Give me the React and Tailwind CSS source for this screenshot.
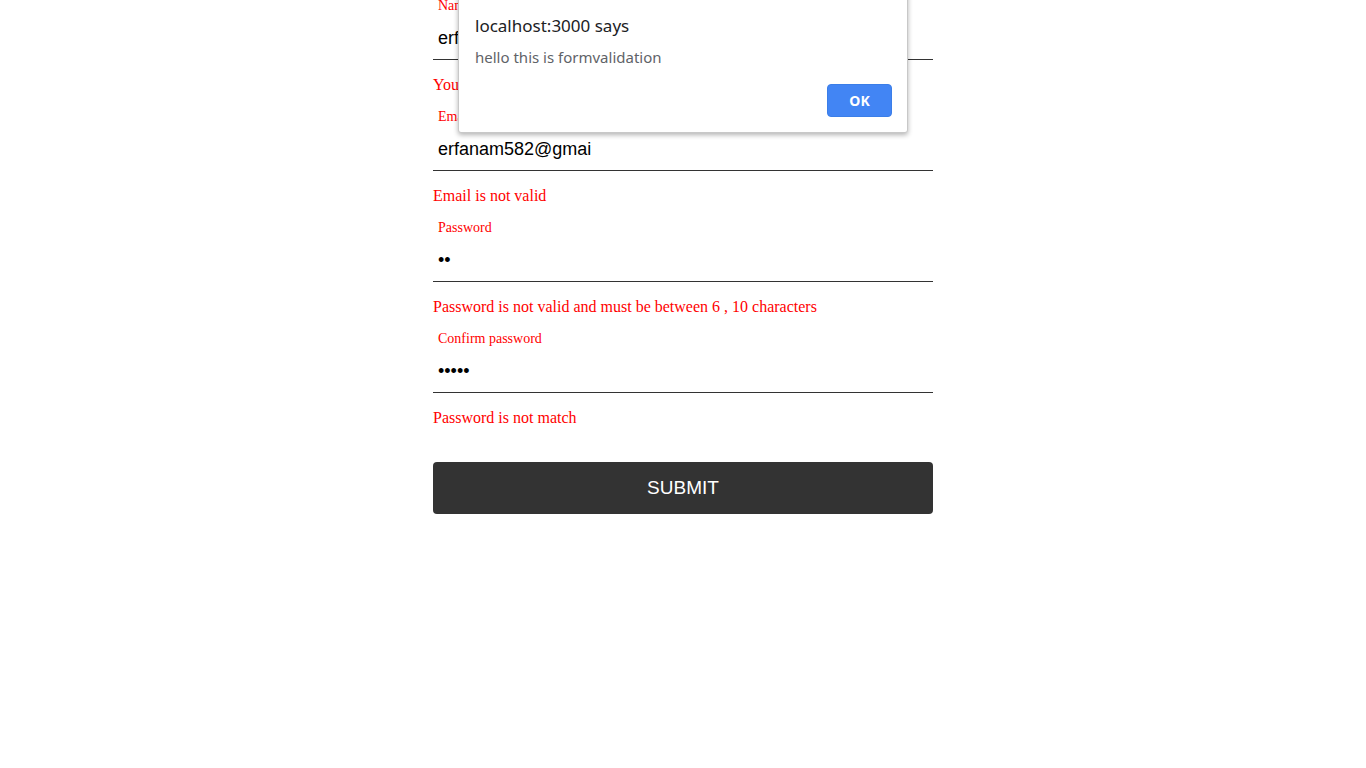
import { useState } from 'react'

const FIELDS = [
  { label: 'Name', type: 'text', value: 'erfan', error: 'Your name is not valid' },
  { label: 'Email', type: 'text', value: 'erfanam582@gmai', error: 'Email is not valid' },
  { label: 'Password', type: 'password', value: 'ab', error: 'Password is not valid and must be between 6 , 10 characters' },
  { label: 'Confirm password', type: 'password', value: 'abcde', error: 'Password is not match' },
]

export default function App() {
  const [values, setValues] = useState(FIELDS.map(f => f.value))
  const [showAlert, setShowAlert] = useState(true)

  return (
    <div className="relative min-h-[768px] bg-white overflow-hidden">
      {/* form (page is scrolled, so the top is cut off) */}
      <form className="w-[500px] mx-auto -mt-[3px] flex flex-col"
        onSubmit={e => { e.preventDefault(); setShowAlert(true) }}>
        {FIELDS.map((f, i) => (
          <div key={f.label} className="flex flex-col">
            <label className="pt-[1px] pl-[5px] text-[14px] leading-[16px] text-[#ff0000] font-['Liberation_Serif',serif]">
              {f.label}
            </label>
            <input type={f.type} value={values[i]}
              onChange={e => setValues(v => v.map((x, j) => (j === i ? e.target.value : x)))}
              className="mt-[1px] h-[45px] pl-[5px] pt-[2px] border-b border-[#333] text-[18px] text-black font-['Liberation_Sans',Arial,sans-serif] outline-none bg-transparent" />
            <div className="mt-[16px] mb-[14px] text-[16px] leading-[18px] text-[#ff0000] font-['Liberation_Serif',serif]">
              {f.error}
            </div>
          </div>
        ))}
        <button type="submit"
          className="mt-[21px] h-[52px] w-full rounded-[4px] bg-[#333333] text-white text-[19px] font-['Liberation_Sans',Arial,sans-serif]">
          SUBMIT
        </button>
      </form>

      {/* browser alert */}
      {showAlert && (
        <div className="absolute left-[458px] top-[-20px] w-[450px] h-[153px] bg-white rounded-b-[3px] border border-[#c8c8c8] shadow-[0_2px_5px_rgba(0,0,0,0.3)] font-['Noto_Sans','Open_Sans',sans-serif]">
          <div className="pl-[16px] pt-[33px] text-[17px] leading-[24px] text-[#202124]">localhost:3000 says</div>
          <div className="pl-[16px] mt-[9px] text-[15px] leading-[20px] text-[#5f6368]">hello this is formvalidation</div>
          <div className="flex justify-end pr-[15px] mt-[17px]">
            <button onClick={() => setShowAlert(false)}
              className="w-[65px] h-[33px] rounded-[4px] bg-[#4285f4] border border-[#3b7ee8] text-white text-[14px] font-bold">
              OK
            </button>
          </div>
        </div>
      )}
    </div>
  )
}
